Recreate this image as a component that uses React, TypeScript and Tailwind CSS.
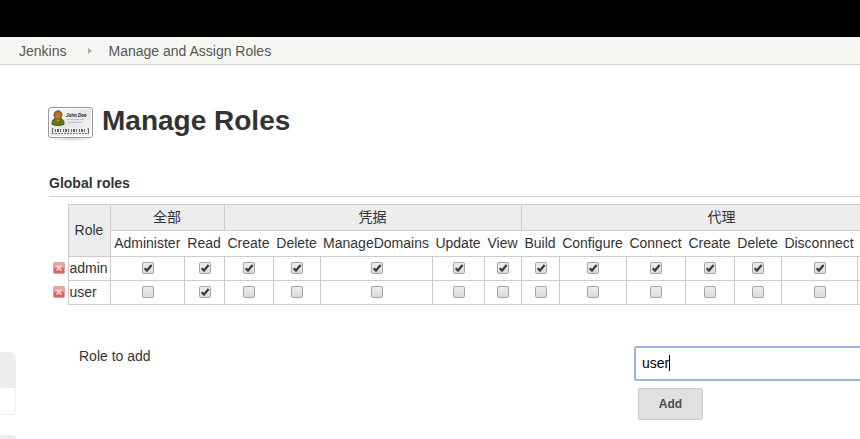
import React from "react";

type Permission = { name: string; width: string; user?: boolean; blank?: boolean };
type Group = { title: string; permissions: Permission[] };

const groups: Group[] = [
  {
    title: "全部",
    permissions: [
      { name: "Administer", width: "w-[74px]" },
      { name: "Read", width: "w-[40px]", user: true },
    ],
  },
  {
    title: "凭据",
    permissions: [
      { name: "Create", width: "w-[49px]" },
      { name: "Delete", width: "w-[47px]" },
      { name: "ManageDomains", width: "w-[112px]" },
      { name: "Update", width: "w-[52px]" },
      { name: "View", width: "w-[37px]" },
    ],
  },
  {
    title: "代理",
    permissions: [
      { name: "Build", width: "w-[38px]" },
      { name: "Configure", width: "w-[67px]" },
      { name: "Connect", width: "w-[59px]" },
      { name: "Create", width: "w-[49px]" },
      { name: "Delete", width: "w-[47px]" },
      { name: "Disconnect", width: "w-[76px]" },
      { name: "", width: "w-[65px]", blank: true },
    ],
  },
];

const columns = groups.flatMap((group) =>
  group.permissions.map((permission) => ({ ...permission, group: group.title })),
);

function BadgeIcon() {
  return (
    <svg viewBox="0 0 48 48" className="size-12 shrink-0" aria-hidden="true">
      <defs>
        <linearGradient id="card" x1="0" y1="0" x2="1" y2="1">
          <stop offset="0" stopColor="#ffffff" />
          <stop offset="0.5" stopColor="#e6e6e6" />
          <stop offset="1" stopColor="#fafafa" />
        </linearGradient>
        <radialGradient id="shade">
          <stop offset="0" stopColor="#000" stopOpacity="0.18" />
          <stop offset="1" stopColor="#000" stopOpacity="0" />
        </radialGradient>
      </defs>
      <ellipse cx="23" cy="41" rx="22" ry="4" fill="url(#shade)" />
      <rect x="0.5" y="10.5" width="44" height="30" rx="2.5" fill="url(#card)" stroke="#999999" />
      <rect x="1.5" y="11.5" width="42" height="28" rx="1.5" fill="none" stroke="#fff" />
      <path d="M4 27.500 C3.500 23 6 21 10 21 S16.500 23 16 27.500 Q10 30 4 27.500Z" fill="#5c7a1c" stroke="#3f4d12" strokeWidth="0.8" />
      <path d="M8 21.500L10 25L12 21.500Z" fill="#d8a04a" />
      <ellipse cx="10" cy="18" rx="4" ry="4.300" fill="#a76422" stroke="#6b4216" strokeWidth="0.8" />
      <ellipse cx="10" cy="19" rx="2.300" ry="2.800" fill="#b97832" />
      <text x="18" y="19.500" fontSize="4.500" fontWeight="bold" fontStyle="italic" fill="#222">John Doe</text>
      <path d="M19 22.500h17M20 25.500h14" stroke="#c4c4c4" strokeWidth="1" />
      <path d="M5.500 31.500h-1v5h1M39.500 31.500h1v5h-1" fill="none" stroke="#444" strokeWidth="0.8" />
      <path d="M7 33.500H39" stroke="#666" strokeWidth="3" strokeDasharray="1 1 2 1 1 2" />
      <path d="M7 36.500h32" stroke="#777" strokeWidth="1" strokeDasharray="2 1" />
    </svg>
  );
}

function DeleteButton({ role }: { role: string }) {
  return (
    <button type="button" aria-label={`Delete ${role}`} className="ml-1 block size-3">
      <svg viewBox="0 0 12 12" className="size-3" aria-hidden="true">
        <rect x="0.5" y="0.5" width="11" height="11" rx="1" fill="#eba3a3" stroke="#dba5a5" />
        <path d="M1 6h10v5H1z" fill="#dc6464" />
        <path d="M3.500 3.500l5 5M8.500 3.500l-5 5" stroke="#f8e0e0" strokeWidth="1.600" />
      </svg>
    </button>
  );
}

function Check({ checked, label }: { checked: boolean; label: string }) {
  return (
    <label className="relative mx-auto block size-3">
      <input
        type="checkbox"
        defaultChecked={checked}
        aria-label={label}
        className="peer block size-3 appearance-none rounded-xs border border-[#a5a5a5] bg-linear-to-b from-[#ededed] to-[#dcdcdc]"
      />
      <svg viewBox="0 0 12 12" className="pointer-events-none absolute inset-0 hidden size-3 peer-checked:block" aria-hidden="true">
        <path d="M2.700 6.200L5 8.500L9.600 3" fill="none" stroke="#3c3c3c" strokeWidth="2.200" />
      </svg>
    </label>
  );
}

const border = "border border-[#cccccc]";
const heading = "p-0 pb-0.5 font-normal";

function RolesTable() {
  return (
    <table className="w-[873px] table-fixed border-collapse text-sm">
      <colgroup>
        <col className="w-[19px]" />
        <col className="w-[42px]" />
        {columns.map((c) => (
          <col key={c.group + c.name} className={c.width} />
        ))}
      </colgroup>
      <thead>
        <tr className="h-[26px]">
          <td rowSpan={2} />
          <th rowSpan={2} className={`${border} ${heading} bg-[#ededed]`}>Role</th>
          {groups.map((g) => (
            <th key={g.title} colSpan={g.permissions.length} className={`${border} ${heading} bg-[#ededed]`}>
              {g.title}
            </th>
          ))}
        </tr>
        <tr className="h-[26px]">
          {columns.map((c) => (
            <th key={c.group + c.name} className={heading}>{c.name}</th>
          ))}
        </tr>
      </thead>
      <tbody>
        {["admin", "user"].map((role) => (
          <tr key={role} className="h-6">
            <td className="p-0 pb-0.5">
              <DeleteButton role={role} />
            </td>
            <th className={`${border} ${heading} pl-px text-left`}>{role}</th>
            {columns.map((c) => (
              <td key={c.group + c.name} className={`${border} p-0 pb-0.5 pl-px`}>
                {!c.blank && (
                  <Check checked={role === "admin" || !!c.user} label={`${role}: ${c.group} ${c.name}`} />
                )}
              </td>
            ))}
          </tr>
        ))}
      </tbody>
    </table>
  );
}

export default function App() {
  return (
    <div className="min-h-screen overflow-x-hidden bg-white font-['Liberation_Sans','Noto_Sans_CJK_SC',sans-serif] text-[#333333]">
      <div className="h-[37px] bg-black" />
      <nav aria-label="Breadcrumb" className="flex h-7 items-center border-b border-[#d3d3cc] bg-[#f6f7f2] pl-[19px] text-sm text-[#555555]">
        <a href="#jenkins">Jenkins</a>
        <svg viewBox="0 0 4 6" className="mr-4 ml-[22px] h-1.5 w-1" aria-hidden="true">
          <path d="M0 0L4 3L0 6Z" fill="#aaaaaa" />
        </svg>
        <a href="#roles">Manage and Assign Roles</a>
      </nav>
      <div className="flex items-start">
        <aside className="w-4 shrink-0 pt-[287px]">
          <div className="h-9 rounded-tr-md bg-[#ededed]" />
          <div className="h-[27px] rounded-br-sm border-r border-b border-[#eeeeee]" />
          <div className="mt-5 h-1 rounded-tr-md bg-[#ededed]" />
        </aside>
        <main className="ml-8 shrink-0 pt-8">
          <h1 className="flex items-center gap-1.5 text-[28px] leading-12 font-bold">
            <BadgeIcon />
            Manage Roles
          </h1>
          <section className="ml-px">
            <h2 className="mt-7 mb-[7px] border-b border-[#cccccc] pb-[3px] text-sm font-bold">Global roles</h2>
            <RolesTable />
            <form className="mt-[41px] flex items-start pl-[30px]" onSubmit={(e) => e.preventDefault()}>
              <label htmlFor="role" className="w-[555px] shrink-0 text-sm">Role to add</label>
              <div className="relative flex-1">
                <input
                  id="role"
                  defaultValue="user"
                  className="block h-[35px] w-full rounded-xs border-2 border-[#9db4dc] bg-white px-1.5 pb-0.5 text-sm text-black outline-none"
                />
                <span className="absolute top-[9px] left-[35px] h-4 w-px bg-black" />
                <button
                  type="submit"
                  className="mt-[7px] ml-1 block h-8 w-[65px] rounded-xs border border-[#cccccc] bg-[#e0e0e0] text-xs font-bold text-[#4d4d4d]"
                >
                  Add
                </button>
              </div>
            </form>
          </section>
        </main>
      </div>
    </div>
  );
}
